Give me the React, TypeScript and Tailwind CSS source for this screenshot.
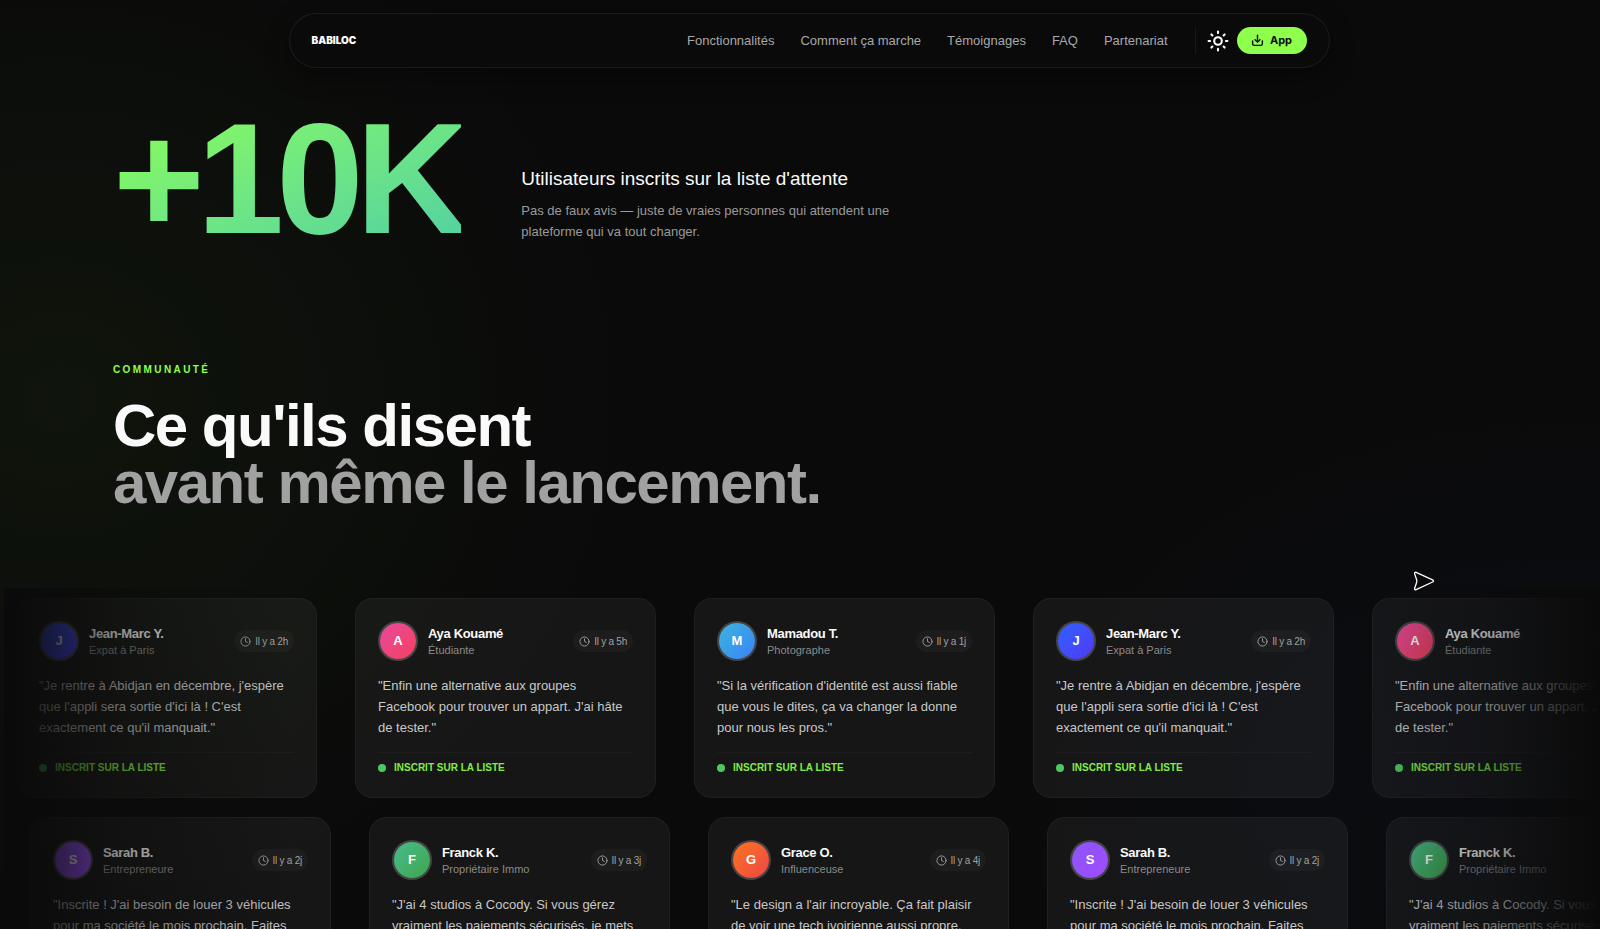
import React from 'react';
import { Clock } from 'lucide-react';

interface Testimonial {
  name: string;
  role: string;
  time: string;
  quote: string;
  gradient: string;
}

const navLinks = ['Fonctionnalités', 'Comment ça marche', 'Témoignages', 'FAQ', 'Partenariat'];

const jeanMarc: Testimonial = {
  name: 'Jean-Marc Y.',
  role: 'Expat à Paris',
  time: 'Il y a 2h',
  quote: "Je rentre à Abidjan en décembre, j'espère que l'appli sera sortie d'ici là ! C'est exactement ce qu'il manquait.",
  gradient: 'from-[#2b5fff] to-[#4f39f6]',
};

const aya: Testimonial = {
  name: 'Aya Kouamé',
  role: 'Étudiante',
  time: 'Il y a 5h',
  quote: "Enfin une alternative aux groupes Facebook pour trouver un appart. J'ai hâte de tester.",
  gradient: 'from-[#e8489c] to-[#f4405e]',
};

const mamadou: Testimonial = {
  name: 'Mamadou T.',
  role: 'Photographe',
  time: 'Il y a 1j',
  quote: "Si la vérification d'identité est aussi fiable que vous le dites, ça va changer la donne pour nous les pros.",
  gradient: 'from-[#3fb4dc] to-[#3b82f6]',
};

const sarah: Testimonial = {
  name: 'Sarah B.',
  role: 'Entrepreneure',
  time: 'Il y a 2j',
  quote: "Inscrite ! J'ai besoin de louer 3 véhicules pour ma société le mois prochain. Faites vite !",
  gradient: 'from-[#8b55f8] to-[#a04bff]',
};

const franck: Testimonial = {
  name: 'Franck K.',
  role: 'Propriétaire Immo',
  time: 'Il y a 3j',
  quote: "J'ai 4 studios à Cocody. Si vous gérez vraiment les paiements sécurisés, je mets tout chez vous.",
  gradient: 'from-[#48bb8a] to-[#3fa64c]',
};

const grace: Testimonial = {
  name: 'Grace O.',
  role: 'Influenceuse',
  time: 'Il y a 4j',
  quote: "Le design a l'air incroyable. Ça fait plaisir de voir une tech ivoirienne aussi propre. Félicitations !",
  gradient: 'from-[#f97316] to-[#ef4444]',
};

const firstRow = [jeanMarc, aya, mamadou, jeanMarc, aya];
const secondRow = [sarah, franck, grace, sarah, franck];

const DownloadIcon = () => (
  <svg
    viewBox="0 0 24 24"
    className="w-[13px] h-[13px]"
    fill="none"
    stroke="currentColor"
    strokeWidth="2.6"
    strokeLinecap="round"
    strokeLinejoin="round"
  >
    <path d="M12 2v12.5" />
    <path d="M7.5 10.5 12 15l4.5-4.5" />
    <path d="M3 13v5a3 3 0 0 0 3 3h12a3 3 0 0 0 3-3v-5" />
  </svg>
);

const SunIcon = () => (
  <svg viewBox="0 0 24 24" className="w-6 h-6" fill="none" stroke="currentColor" strokeWidth="2.1" strokeLinecap="round">
    <circle cx="12" cy="12" r="3.8" />
    <path d="M12 2.6v1.5M12 19.9v1.5M2.6 12h1.5M19.9 12h1.5M5.4 5.4l1 1M17.6 17.6l1 1M5.4 18.6l1-1M17.6 6.4l1-1" />
  </svg>
);

const Header = () => (
  <header className="relative pt-[13px] pl-[18px]">
    <div className="mx-auto flex h-[55px] max-w-[1041px] items-center justify-between rounded-full border border-white/7 bg-[#0a0a0a] px-[22px] shadow-[0_8px_24px_rgba(0,0,0,0.4)]">
      <a href="#" className="font-['Inter',sans-serif] text-[10px] font-black text-white">
        BABILOC
      </a>
      <div className="flex items-center">
        <nav className="flex items-center gap-[26px] text-[13px] text-[#a8a8a8]">
          {navLinks.map((link) => (
            <a key={link} href="#" className="hover:text-white transition-colors">
              {link}
            </a>
          ))}
        </nav>
        <div className="ml-[27px] h-[27px] w-px bg-white/6" />
        <button aria-label="Changer de thème" className="ml-[10px] text-white">
          <SunIcon />
        </button>
        <button className="ml-[7px] flex h-[27px] w-[70px] items-center justify-center gap-[6px] rounded-full bg-[#8eff4c] font-['Inter',sans-serif] text-[11px] font-bold text-[#0a0a0a]">
          <DownloadIcon />
          App
        </button>
      </div>
    </div>
  </header>
);

const TestimonialCard: React.FC<{ item: Testimonial }> = ({ item }) => (
  <article className="w-[301px] shrink-0 rounded-[18px] border border-white/4 bg-white/5 p-[22px]">
    <div className="flex items-center">
      <div
        className={`flex h-10 w-10 items-center justify-center rounded-full border-2 border-white/20 bg-linear-to-br bg-clip-padding ${item.gradient} text-[13px] font-bold text-white`}
      >
        {item.name[0]}
      </div>
      <div className="ml-[10px] flex-1">
        <h3 className="text-[13px] leading-[17px] font-bold tracking-tight text-[#fafafa]">{item.name}</h3>
        <p className="text-[11px] leading-4 text-[#8a8a8a]">{item.role}</p>
      </div>
      <div className="flex h-[22px] items-center gap-1 rounded-full bg-white/3 px-[6px] text-[10px] tracking-tight text-[#a1a1a1]">
        <Clock className="w-[11px] h-[11px]" />
        {item.time}
      </div>
    </div>
    <p className="mt-[14px] text-[13px] leading-[21px] text-[#c8c8c8]">{`"${item.quote}"`}</p>
    <div className="mt-[14px] flex items-center gap-2 border-t border-white/3 pt-2">
      <span className="h-2 w-2 rounded-full bg-[#4fc763]" />
      <span className="text-[10px] leading-[14px] font-bold text-[#84ec48] uppercase">Inscrit sur la liste</span>
    </div>
  </article>
);

const App = () => {
  return (
    <div className="relative h-screen overflow-hidden bg-[#0a0a0a] font-['Liberation_Sans',Arial,sans-serif] text-white">
      {/* Ambient glows */}
      <div className="absolute inset-0 bg-[radial-gradient(ellipse_580px_520px_at_60px_400px,rgba(60,110,30,0.1),transparent),radial-gradient(ellipse_600px_420px_at_1560px_780px,rgba(25,50,120,0.08),transparent)]" />

      <Header />

      <main className="relative">
        <section className="flex items-end gap-[60px] px-[113px] pt-8">
          <p className="bg-linear-to-br from-[#8eff4c] to-[#50cfa3] bg-clip-text text-[157px] leading-none font-bold tracking-tighter text-transparent">
            +10K
          </p>
          <div className="max-w-[376px] pb-[15px]">
            <h2 className="text-[19px] leading-7 text-[#fafafa]">Utilisateurs inscrits sur la liste d'attente</h2>
            <p className="mt-[7px] text-[13px] leading-[21px] text-[#9a9a9a]">
              Pas de faux avis — juste de vraies personnes qui attendent une plateforme qui va tout changer.
            </p>
          </div>
        </section>

        <section className="pt-[105px]">
          <div className="px-[113px]">
            <p className="text-[10px] leading-4 font-bold tracking-[0.24em] text-[#8eff4c] uppercase">Communauté</p>
            <h2 className="mt-[19px] text-[60px] leading-[57px] font-bold tracking-tight text-[#fafafa]">
              Ce qu'ils disent
              <br />
              <span className="text-[#a1a1a1]">avant même le lancement.</span>
            </h2>
          </div>

          {/* Scrolling rows */}
          <div className="relative mt-[77px] ml-1 overflow-hidden py-[10px]">
            <div className="flex gap-[38px] pl-3">
              {firstRow.map((item, index) => (
                <TestimonialCard key={index} item={item} />
              ))}
            </div>
            <div className="mt-[19px] flex gap-[38px] pl-[26px]">
              {secondRow.map((item, index) => (
                <TestimonialCard key={index} item={item} />
              ))}
            </div>
            <div className="absolute inset-y-0 left-0 w-72 bg-linear-to-r from-[#0a0a0a] via-[#0a0a0a]/45 via-40% to-transparent" />
            <div className="absolute inset-y-0 right-0 w-64 bg-linear-to-l from-[#0a0a0a] via-[#0a0a0a]/40 via-40% to-transparent" />
          </div>
        </section>
      </main>

      {/* Cursor */}
      <svg viewBox="0 0 22 20" className="absolute top-[571px] right-[165px] h-5 w-[22px]" fill="#0a0a0a" stroke="#ffffff" strokeWidth="1.3" strokeLinejoin="round">
        <path d="M1.6 2.6C1.3 1.6 2.2 1 3.1 1.4L19.6 8.8C20.8 9.4 20.8 10.5 19.6 11L3.1 18.7C2.2 19.1 1.3 18.5 1.6 17.5L3.7 11.2C3.9 10.4 3.9 9.8 3.7 9Z" />
      </svg>
    </div>
  );
};

export default App;
